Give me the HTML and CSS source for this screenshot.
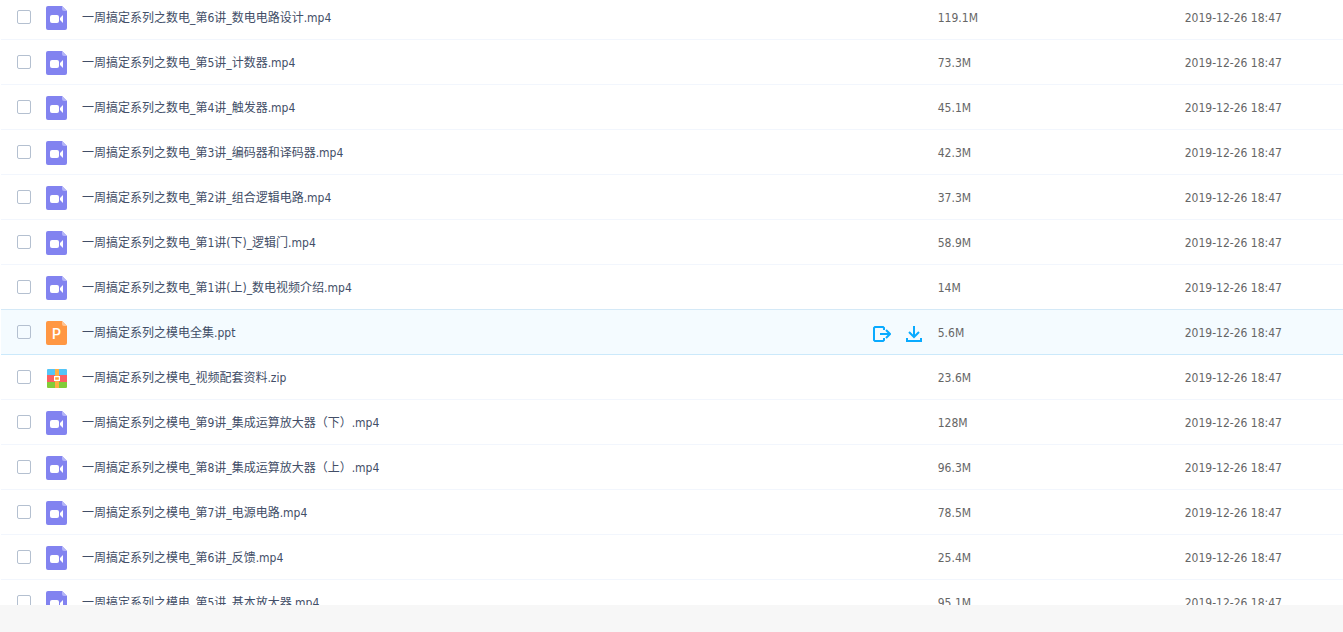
FILE: index.html
```html
<!DOCTYPE html>
<html lang="zh-CN">
<head>
    <meta charset="UTF-8">
    <meta name="viewport" content="width=device-width, initial-scale=1.0">
    <title>文件列表</title>
    <link rel="stylesheet" href="styles.css">
</head>
<body>
<svg class="sprite" aria-hidden="true">
    <symbol id="video" viewBox="0 0 22 26">
        <path d="M2 2H16L21 7V24Q21 26 19 26H2Q0 26 0 24V4Q0 2 2 2Z" fill="#8283f0"/>
        <path d="M16 2L21 7H18Q16 7 16 5Z" fill="#b4b5f8"/>
        <rect x="4" y="11" width="9" height="8" rx="2" fill="#fff"/>
        <path d="M17 11V19L14 16V14Z" fill="#fff"/>
    </symbol>
    <symbol id="ppt" viewBox="0 0 22 26">
        <path d="M2 2H16L21 7V24Q21 26 19 26H2Q0 26 0 24V4Q0 2 2 2Z" fill="#ff9743"/>
        <path d="M16 2L21 7H18Q16 7 16 5Z" fill="#ffc493"/>
        <text class="letter" x="6" y="20">P</text>
    </symbol>
    <symbol id="zip" viewBox="0 0 22 26">
        <path d="M1 11V6Q1 5 2 5H20Q21 5 21 6V11Z" fill="#54c5f7"/>
        <path d="M1 11H21V18H1Z" fill="#fc5f62"/>
        <path d="M1 18H21V23Q21 24 20 24H2Q1 24 1 23Z" fill="#82cc38"/>
        <path d="M9 5H13V24H9Z" fill="#ffb042"/>
        <rect x="9" y="12" width="4" height="4" fill="#ffa436"/>
        <path d="M8.6 12.6H13.4V16.4H8.6Z" fill="none" stroke="#fff" stroke-width="1.2"/>
    </symbol>
</svg>

<main class="list">
    <table class="files">
        <colgroup>
            <col class="col-check">
            <col class="col-icon">
            <col class="col-name">
            <col class="col-actions">
            <col class="col-size">
            <col class="col-date">
        </colgroup>
        <tbody>
        <tr>
            <td class="check"><input type="checkbox" id="f1" aria-labelledby="n1"></td>
            <td><svg class="icon"><use href="#video"/></svg></td>
            <td class="name"><a href="#" id="n1">一周搞定系列之数电_第6讲_数电电路设计.mp4</a></td>
            <td></td>
            <td class="size">119.1M</td>
            <td class="date">2019-12-26 18:47</td>
        </tr>
        <tr>
            <td class="check"><input type="checkbox" id="f2" aria-labelledby="n2"></td>
            <td><svg class="icon"><use href="#video"/></svg></td>
            <td class="name"><a href="#" id="n2">一周搞定系列之数电_第5讲_计数器.mp4</a></td>
            <td></td>
            <td class="size">73.3M</td>
            <td class="date">2019-12-26 18:47</td>
        </tr>
        <tr>
            <td class="check"><input type="checkbox" id="f3" aria-labelledby="n3"></td>
            <td><svg class="icon"><use href="#video"/></svg></td>
            <td class="name"><a href="#" id="n3">一周搞定系列之数电_第4讲_触发器.mp4</a></td>
            <td></td>
            <td class="size">45.1M</td>
            <td class="date">2019-12-26 18:47</td>
        </tr>
        <tr>
            <td class="check"><input type="checkbox" id="f4" aria-labelledby="n4"></td>
            <td><svg class="icon"><use href="#video"/></svg></td>
            <td class="name"><a href="#" id="n4">一周搞定系列之数电_第3讲_编码器和译码器.mp4</a></td>
            <td></td>
            <td class="size">42.3M</td>
            <td class="date">2019-12-26 18:47</td>
        </tr>
        <tr>
            <td class="check"><input type="checkbox" id="f5" aria-labelledby="n5"></td>
            <td><svg class="icon"><use href="#video"/></svg></td>
            <td class="name"><a href="#" id="n5">一周搞定系列之数电_第2讲_组合逻辑电路.mp4</a></td>
            <td></td>
            <td class="size">37.3M</td>
            <td class="date">2019-12-26 18:47</td>
        </tr>
        <tr>
            <td class="check"><input type="checkbox" id="f6" aria-labelledby="n6"></td>
            <td><svg class="icon"><use href="#video"/></svg></td>
            <td class="name"><a href="#" id="n6">一周搞定系列之数电_第1讲(下)_逻辑门.mp4</a></td>
            <td></td>
            <td class="size">58.9M</td>
            <td class="date">2019-12-26 18:47</td>
        </tr>
        <tr>
            <td class="check"><input type="checkbox" id="f7" aria-labelledby="n7"></td>
            <td><svg class="icon"><use href="#video"/></svg></td>
            <td class="name"><a href="#" id="n7">一周搞定系列之数电_第1讲(上)_数电视频介绍.mp4</a></td>
            <td></td>
            <td class="size">14M</td>
            <td class="date">2019-12-26 18:47</td>
        </tr>
        <tr class="active">
            <td class="check"><input type="checkbox" id="f8" aria-labelledby="n8"></td>
            <td><svg class="icon"><use href="#ppt"/></svg></td>
            <td class="name"><a href="#" id="n8">一周搞定系列之模电全集.ppt</a></td>
            <td>
                <div class="actions">
                    <button type="button" aria-label="分享">
                        <svg width="18" height="20" viewBox="0 0 18 20">
                            <path d="M11 8V6L10 5H2L1 6V18L2 19H10L11 18V16M7 12H17M13 8L17 12L13 16"/>
                        </svg>
                    </button>
                    <button type="button" aria-label="下载">
                        <svg width="16" height="20" viewBox="0 0 16 20">
                            <path d="M8 4V14M3 10L8 15L13 10M1 16V19H15V16"/>
                        </svg>
                    </button>
                </div>
            </td>
            <td class="size">5.6M</td>
            <td class="date">2019-12-26 18:47</td>
        </tr>
        <tr>
            <td class="check"><input type="checkbox" id="f9" aria-labelledby="n9"></td>
            <td><svg class="icon"><use href="#zip"/></svg></td>
            <td class="name"><a href="#" id="n9">一周搞定系列之模电_视频配套资料.zip</a></td>
            <td></td>
            <td class="size">23.6M</td>
            <td class="date">2019-12-26 18:47</td>
        </tr>
        <tr>
            <td class="check"><input type="checkbox" id="f10" aria-labelledby="n10"></td>
            <td><svg class="icon"><use href="#video"/></svg></td>
            <td class="name"><a href="#" id="n10">一周搞定系列之模电_第9讲_集成运算放大器（下）.mp4</a></td>
            <td></td>
            <td class="size">128M</td>
            <td class="date">2019-12-26 18:47</td>
        </tr>
        <tr>
            <td class="check"><input type="checkbox" id="f11" aria-labelledby="n11"></td>
            <td><svg class="icon"><use href="#video"/></svg></td>
            <td class="name"><a href="#" id="n11">一周搞定系列之模电_第8讲_集成运算放大器（上）.mp4</a></td>
            <td></td>
            <td class="size">96.3M</td>
            <td class="date">2019-12-26 18:47</td>
        </tr>
        <tr>
            <td class="check"><input type="checkbox" id="f12" aria-labelledby="n12"></td>
            <td><svg class="icon"><use href="#video"/></svg></td>
            <td class="name"><a href="#" id="n12">一周搞定系列之模电_第7讲_电源电路.mp4</a></td>
            <td></td>
            <td class="size">78.5M</td>
            <td class="date">2019-12-26 18:47</td>
        </tr>
        <tr>
            <td class="check"><input type="checkbox" id="f13" aria-labelledby="n13"></td>
            <td><svg class="icon"><use href="#video"/></svg></td>
            <td class="name"><a href="#" id="n13">一周搞定系列之模电_第6讲_反馈.mp4</a></td>
            <td></td>
            <td class="size">25.4M</td>
            <td class="date">2019-12-26 18:47</td>
        </tr>
        <tr>
            <td class="check"><input type="checkbox" id="f14" aria-labelledby="n14"></td>
            <td><svg class="icon"><use href="#video"/></svg></td>
            <td class="name"><a href="#" id="n14">一周搞定系列之模电_第5讲_基本放大器.mp4</a></td>
            <td></td>
            <td class="size">95.1M</td>
            <td class="date">2019-12-26 18:47</td>
        </tr>
        </tbody>
    </table>
</main>
</body>
</html>
```
FILE: styles.css
```css
body {
    margin: 0;
    display: flex;
    flex-direction: column;
    height: 100vh;
    overflow: hidden;
    background-color: #f7f7f7;
    color: #666;
    font-family: "DejaVu Sans Condensed", "Noto Sans", "Noto Sans CJK SC", sans-serif;
    font-size: 12px;
    line-height: 18px;
}

.sprite {
    display: none;
}

.list {
    flex: 1;
    min-height: 0;
    margin-bottom: 27px;
    padding-left: 1px;
    overflow: hidden;
    background-color: #fff;
}

/* first row is partly scrolled out of view */
.files {
    width: 100%;
    margin-top: -5px;
    table-layout: fixed;
    border-collapse: separate;
    border-spacing: 0;
}

.col-check {
    width: 45px;
}

.col-icon {
    width: 36px;
}

.col-actions {
    width: 65px;
}

.col-size {
    width: 18.4%;
}

.col-date {
    width: 11.8%;
}

td {
    box-sizing: border-box;
    height: 45px;
    padding: 0;
    border-bottom: 1px solid #f2f6fd;
    vertical-align: middle;
    white-space: nowrap;
}

.check {
    padding-left: 16px;
}

.name, .size, .date {
    padding-top: 2px;
}

input[type="checkbox"] {
    appearance: none;
    display: block;
    box-sizing: border-box;
    width: 14px;
    height: 14px;
    margin: 0;
    border: 1px solid #b4c0d0;
    border-radius: 2px;
}

input[type="checkbox"]:checked {
    background-color: #09aaff;
}

.icon {
    display: block;
    width: 22px;
    height: 26px;
}

.letter {
    fill: #fff;
    font-family: Roboto, sans-serif;
    font-size: 14px;
    font-weight: 500;
}

.name a {
    color: #424e67;
    text-decoration: none;
}

.name a:hover {
    color: #09aaff;
}

.active td {
    background-color: #f4fbff;
    border-color: #cbe9fb;
}

tr:has(+ .active) td {
    border-color: #d4e9f7;
}

.actions {
    display: flex;
    gap: 15px;
}

.actions button {
    padding: 0;
    border: none;
    background: none;
    cursor: pointer;
}

.actions svg {
    display: block;
    fill: none;
    stroke: #09aaff;
    stroke-width: 2;
}
```
